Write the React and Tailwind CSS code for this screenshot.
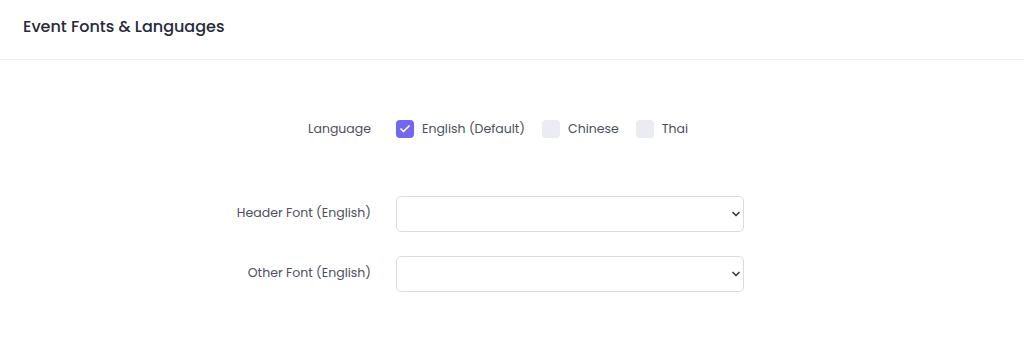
import { Check, ChevronDown } from 'lucide-react'

const font = { fontFamily: 'Poppins, Inter, "Noto Sans", sans-serif' }

function Box({ checked, label }) {
  return (
    <label className="flex items-center">
      <span
        className={`flex h-[18px] w-[18px] items-center justify-center rounded-[4px] ${
          checked ? 'bg-[#7367f0]' : 'bg-[#ebecf3]'
        }`}
      >
        {checked ? <Check className="h-3 w-3 text-white" strokeWidth={3.5} /> : null}
      </span>
      <span className="ml-[8px] text-[12.5px] text-[#4b4f5c]">{label}</span>
    </label>
  )
}

function SelectRow({ label }) {
  return (
    <div className="flex items-center">
      <div className="w-[371px] text-right text-[12.5px] text-[#4b4f5c]">{label}</div>
      <div className="ml-[25px] flex h-[36px] w-[348px] items-center justify-end rounded-[5px] border border-[#d8dbe3] bg-white pr-[1px]">
        <ChevronDown className="h-3 w-3 text-[#3d4150]" strokeWidth={3.5} />
      </div>
    </div>
  )
}

export default function App() {
  return (
    <div className="h-[354px] w-[1024px] bg-white" style={font}>
      <div className="flex h-[60px] items-center border-b border-[#f0f0f3] px-[23px] pb-[6px]">
        <h2 className="text-[16px] font-medium text-[#262a3b]">Event Fonts &amp; Languages</h2>
      </div>
      <div className="pt-[60px]">
        <div className="flex items-center">
          <div className="w-[371px] text-right text-[12.5px] text-[#4b4f5c]">Language</div>
          <div className="ml-[25px] flex items-center gap-[17px]">
            <Box checked label="English (Default)" />
            <Box label="Chinese" />
            <Box label="Thai" />
          </div>
        </div>
        <div className="mt-[57px] flex flex-col gap-[24px]">
          <SelectRow label="Header Font (English)" />
          <SelectRow label="Other Font (English)" />
        </div>
      </div>
    </div>
  )
}
